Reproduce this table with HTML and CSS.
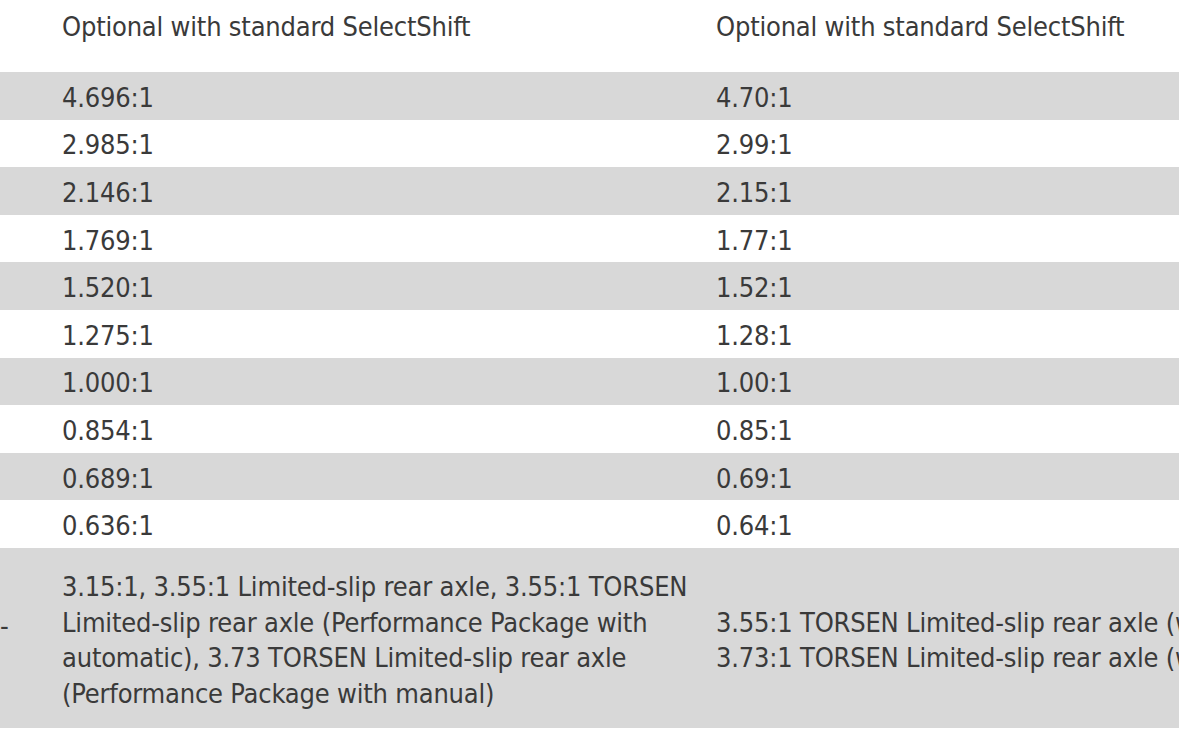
FILE: index.html
```html
<!DOCTYPE html>
<html>
<head>
<meta charset="utf-8">
<link rel="stylesheet" href="styles.css">
</head>
<body>
<div class="table">
  <div class="row head">
    <div class="cell lead"></div>
    <div class="cell">Optional with standard SelectShift</div>
    <div class="cell">Optional with standard SelectShift</div>
  </div>
  <div class="row alt"><div class="cell lead"></div><div class="cell">4.696:1</div><div class="cell">4.70:1</div></div>
  <div class="row"><div class="cell lead"></div><div class="cell">2.985:1</div><div class="cell">2.99:1</div></div>
  <div class="row alt"><div class="cell lead"></div><div class="cell">2.146:1</div><div class="cell">2.15:1</div></div>
  <div class="row"><div class="cell lead"></div><div class="cell">1.769:1</div><div class="cell">1.77:1</div></div>
  <div class="row alt"><div class="cell lead"></div><div class="cell">1.520:1</div><div class="cell">1.52:1</div></div>
  <div class="row"><div class="cell lead"></div><div class="cell">1.275:1</div><div class="cell">1.28:1</div></div>
  <div class="row alt"><div class="cell lead"></div><div class="cell">1.000:1</div><div class="cell">1.00:1</div></div>
  <div class="row"><div class="cell lead"></div><div class="cell">0.854:1</div><div class="cell">0.85:1</div></div>
  <div class="row alt"><div class="cell lead"></div><div class="cell">0.689:1</div><div class="cell">0.69:1</div></div>
  <div class="row"><div class="cell lead"></div><div class="cell">0.636:1</div><div class="cell">0.64:1</div></div>
  <div class="row alt tall">
    <div class="cell lead dash">-</div>
    <div class="cell multi">3.15:1, 3.55:1 Limited-slip rear axle, 3.55:1 TORSEN<br>Limited-slip rear axle (Performance Package with<br>automatic), 3.73 TORSEN Limited-slip rear axle<br>(Performance Package with manual)</div>
    <div class="cell multi clip">3.55:1 TORSEN Limited-slip rear axle (with automatic)<br>3.73:1 TORSEN Limited-slip rear axle (with manual)</div>
  </div>
</div>
</body>
</html>
```

FILE: styles.css
```css
html, body {
  margin: 0;
  padding: 0;
  background: #ffffff;
  overflow: hidden;
}
body {
  width: 1179px;
  height: 743px;
  font-family: "DejaVu Sans Condensed", "Liberation Sans", sans-serif;
  font-size: 27px;
  letter-spacing: -0.2px;
  color: #3a3a3a;
}
.table {
  display: flex;
  flex-direction: column;
}
.row {
  display: grid;
  grid-template-columns: 22px 654px 1fr;
  height: 47.6px;
  align-items: center;
}
.row.alt {
  background: #d8d8d8;
}
.row.head {
  height: 72px;
  align-items: start;
  padding-top: 11px;
  box-sizing: border-box;
}
.cell {
  padding-left: 40px;
  padding-top: 4px;
  white-space: nowrap;
  line-height: 32px;
}
.row.head .cell {
  padding-top: 0;
}
.cell.lead {
  padding-left: 0;
}
.row.tall {
  height: 180px;
}
.cell.multi {
  line-height: 35.5px;
  padding-top: 5px;
}
.cell.dash {
  padding-bottom: 28px;
}
.cell.clip {
  overflow: hidden;
}
```
